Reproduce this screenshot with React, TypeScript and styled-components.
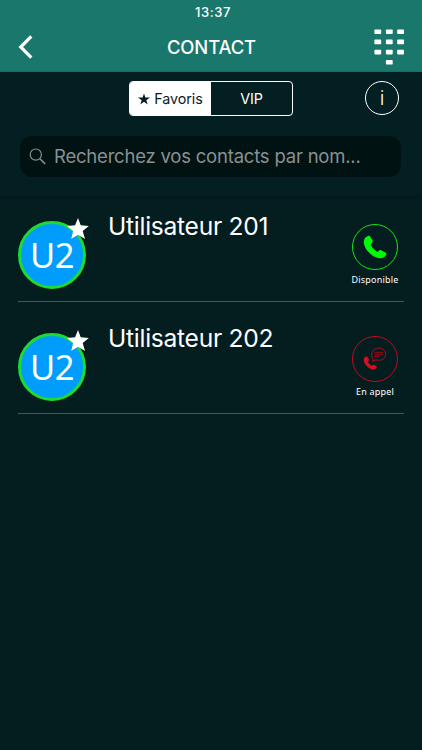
import React from "react";
import styled, { createGlobalStyle } from "styled-components";

const GlobalStyle = createGlobalStyle`
  * { box-sizing: border-box; }
  body { margin: 0; background: #041d1f; }
`;

const Screen = styled.div`
  display: flex;
  flex-direction: column;
  width: 422px;
  height: 750px;
  overflow: hidden;
  background: #041d1f;
  color: #fff;
  font-family: Inter, "Liberation Sans", sans-serif;
`;

const Header = styled.header`
  height: 72px;
  flex: none;
  background: #1a776c;
`;

const StatusBar = styled.div`
  height: 24px;
  padding-left: 4px;
  text-align: center;
  font-size: 13px;
  line-height: 24px;
  font-weight: 500;
  letter-spacing: 0.55px;
`;

const NavBar = styled.div`
  display: grid;
  grid-template-columns: 60px 1fr 60px;
  height: 48px;
`;

const IconButton = styled.button<{ $pad: string }>`
  display: flex;
  align-items: flex-start;
  padding: ${(p) => p.$pad};
  border: 0;
  background: none;
  color: inherit;
`;

const Title = styled.h1`
  margin: 0;
  padding-left: 1px;
  text-align: center;
  font-size: 18.4px;
  line-height: 47px;
  font-weight: 500;
  letter-spacing: -0.1px;
  white-space: nowrap;
`;

const Tools = styled.section`
  height: 124px;
  flex: none;
  padding-top: 9px;
  background: #041f21;
  border-bottom: 1px solid #03191a;
  box-shadow: 0 1px 2px #03181a;
`;

const FilterRow = styled.div`
  display: flex;
  align-items: flex-start;
  padding-left: 129px;
  height: 55px;
`;

const Segments = styled.div`
  display: flex;
  width: 164px;
  height: 35px;
  border: 1px solid #fff;
  border-radius: 4px;
  overflow: hidden;
`;

const Segment = styled.button<{ $active?: boolean }>`
  display: flex;
  align-items: center;
  justify-content: center;
  gap: 4px;
  flex: 1;
  padding: 0;
  border: 0;
  background: ${(p) => (p.$active ? "#fff" : "transparent")};
  color: ${(p) => (p.$active ? "#041d1f" : "#fff")};
  font: 400 14.3px Inter, sans-serif;
  letter-spacing: -0.05px;
`;

const InfoButton = styled.button`
  display: flex;
  width: 34px;
  height: 34px;
  margin-left: 72px;
  padding: 0;
  align-items: center;
  justify-content: center;
  border: 1.4px solid #fff;
  border-radius: 50%;
  background: none;
  color: #fff;
  font: 300 20px Inter, sans-serif;
`;

const SearchField = styled.div`
  display: flex;
  align-items: center;
  gap: 8px;
  height: 41px;
  margin: 0 21px 0 20px;
  padding-left: 9px;
  border-radius: 12px;
  background: #011212;
  color: #8a9192;
  font-size: 18.5px;
  white-space: nowrap;
`;

const Placeholder = styled.span`
  letter-spacing: -0.21px;
  line-height: 40px;
  padding-bottom: 2px;
`;

const Contact = styled.article`
  display: grid;
  grid-template-columns: 90px 1fr 54px;
  height: 112px;
  margin: 0 18px;
  border-bottom: 1px solid #435759;
  &:first-child { height: 106px; }
`;

const List = styled.main`
  display: flex;
  flex-direction: column;
`;

const Avatar = styled.div`
  position: relative;
  width: 68px;
  height: 68px;
  align-self: end;
  margin-bottom: 12.5px;
  border: 3px solid #1edb32;
  border-radius: 50%;
  background: #009dff;
  text-align: center;
  font-family: "Noto Sans", sans-serif;
  font-size: 34.5px;
  line-height: 61px;
  letter-spacing: -0.5px;
`;

const Favorite = styled.svg`
  position: absolute;
  right: -6px;
  top: -6px;
`;

const Name = styled.h2`
  align-self: end;
  margin: 0 0 60px;
  font-size: 24.6px;
  line-height: 30px;
  font-weight: 400;
  letter-spacing: -0.28px;
  white-space: nowrap;
`;

const Presence = styled.div`
  display: flex;
  flex-direction: column;
  align-items: center;
  align-self: end;
  width: 60px;
  margin: 0 0 15px -5px;
  font: 9px/12px "Noto Sans", sans-serif;
  letter-spacing: 0.2px;
  white-space: nowrap;
`;

const CallButton = styled.button<{ $color: string }>`
  display: flex;
  width: 46px;
  height: 46px;
  margin-bottom: 4px;
  padding: 0;
  align-items: center;
  justify-content: center;
  border: 1.4px solid ${(p) => p.$color};
  border-radius: 50%;
  background: none;
  color: ${(p) => p.$color};
`;

const handset =
  "M5 .8 C6.3 .2 7.1 .8 8 2.5 L9.6 5.2 C10.3 6.7 9.8 7.7 8.5 8.5 C7.8 9 7.8 9.7 8.2 10.5 C9.5 13 11.5 15.1 14 16.6 C14.8 17 15.4 16.8 15.9 16.1 C16.8 15 17.8 14.8 19 15.5 L22.4 17.4 C24 18.3 24.3 19.3 23.4 20.5 C21.5 23.2 18.7 24.3 14.5 23 C7.5 20.5 1.6 14.3 .9 7.7 C.6 4.2 2 2 5 .8 Z";

const Available = () => (
  <svg width="24" height="24" viewBox="0 0 24.5 24">
    <path d={handset} fill="#00fb08" />
  </svg>
);

const Busy = () => (
  <svg width="44" height="44" viewBox="0 0 44 44">
    <g transform="translate(10.3 19.1) scale(.57)">
      <path d={handset} fill="#dc0c22" />
    </g>
    <path
      d="M19.7 24.1 C20.1 22.8 20 21.8 19.3 20.5 C17.3 15.8 20.1 11.1 25.6 11.1 C29.9 11.1 32.6 13.8 32.6 17.2 C32.6 21 29.8 23.3 25.8 23.3 Q24.2 23.3 22.8 22.8 Z"
      fill="none"
      stroke="currentColor"
      strokeWidth=".9"
    />
    <path d="M21.3 15.6H30 M21.3 17.6H29.8 M21.3 19.5H26.5" stroke="currentColor" strokeWidth=".7" />
  </svg>
);

const contacts = [
  { name: "Utilisateur 201", status: "Disponible", busy: false },
  { name: "Utilisateur 202", status: "En appel", busy: true },
];

export default function App() {
  return (
    <Screen>
      <GlobalStyle />
      <Header>
        <StatusBar>13:37</StatusBar>
        <NavBar>
          <IconButton $pad="10px 0 0 17px" aria-label="Retour">
            <svg width="18" height="26" viewBox="0 0 18 26">
              <path d="M14.3 2.3 3.7 13 14.3 23.7" fill="none" stroke="#fff" strokeWidth="3.2" />
            </svg>
          </IconButton>
          <Title>CONTACT</Title>
          <IconButton $pad="5px 0 0 12px" aria-label="Clavier">
            <svg width="31" height="36" viewBox="0 0 31 36" fill="#fff">
              {[0, 10.2, 20.4].map((y) =>
                [0.4, 11.9, 23.2].map((x) => (
                  <rect key={`${x}-${y}`} x={x} y={y + 0.4} width="6.8" height="4.6" rx=".8" />
                )),
              )}
              <rect x="11.9" y="31" width="6.8" height="4.6" rx=".8" />
            </svg>
          </IconButton>
        </NavBar>
      </Header>
      <Tools>
        <FilterRow>
          <Segments>
            <Segment $active>
              <svg width="12" height="12" viewBox="0 0 24 24" fill="currentColor">
                <path d="m12 1 2.7 8H24l-7.4 5.4 2.8 8.6-7.4-5.3L4.6 23l2.8-8.6L0 9h9.3Z" />
              </svg>
              Favoris
            </Segment>
            <Segment>VIP</Segment>
          </Segments>
          <InfoButton>i</InfoButton>
        </FilterRow>
        <SearchField>
          <svg width="17" height="17" viewBox="0 0 17 17" fill="none" stroke="currentColor" strokeWidth="1.2">
            <circle cx="6.8" cy="6.6" r="5.6" />
            <path d="m10.9 10.7 5.2 5.2" strokeWidth="1.5" />
          </svg>
          <Placeholder>Recherchez vos contacts par nom...</Placeholder>
        </SearchField>
      </Tools>
      <List>
        {contacts.map((c) => (
          <Contact key={c.name}>
            <Avatar>
              U2
              <Favorite width="22" height="22" viewBox="0 0 22 22">
                <path d="m11 0 2.7 7.3 8.1.6-6.1 5.2 2.3 8-7-4.3-6.8 4.3 2-8L0 7.9l8.1-.6Z" fill="#fff" />
              </Favorite>
            </Avatar>
            <Name>{c.name}</Name>
            <Presence>
              <CallButton $color={c.busy ? "#c9081c" : "#12e61c"}>
                {c.busy ? <Busy /> : <Available />}
              </CallButton>
              {c.status}
            </Presence>
          </Contact>
        ))}
      </List>
    </Screen>
  );
}
